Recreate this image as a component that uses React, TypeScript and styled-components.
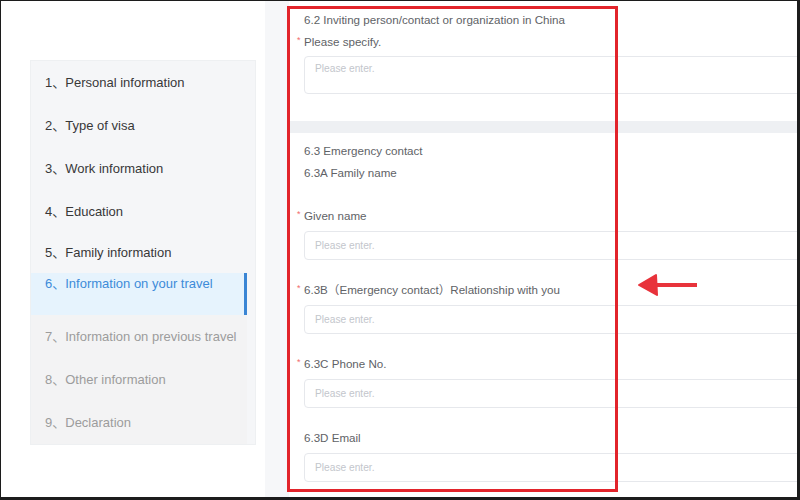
import React from 'react';
import styled, { createGlobalStyle } from 'styled-components';

const GlobalStyle = createGlobalStyle`
    html, body {
        margin: 0;
        padding: 0;
        background: #ffffff;
    }
    body {
        font-family: 'Liberation Sans', Arial, 'Noto Sans CJK SC', sans-serif;
    }
`;

const steps = [
    { no: 1, label: 'Personal information', state: 'done' },
    { no: 2, label: 'Type of visa', state: 'done' },
    { no: 3, label: 'Work information', state: 'done' },
    { no: 4, label: 'Education', state: 'done' },
    { no: 5, label: 'Family information', state: 'done' },
    { no: 6, label: 'Information on your travel', state: 'active' },
    { no: 7, label: 'Information on previous travel', state: 'todo' },
    { no: 8, label: 'Other information', state: 'todo' },
    { no: 9, label: 'Declaration', state: 'todo' },
] as const;

type StepState = 'done' | 'active' | 'todo';

const fields = [
    { label: 'Given name', required: true },
    { label: '6.3B（Emergency contact）Relationship with you', required: true },
    { label: '6.3C Phone No.', required: true },
    { label: '6.3D Email', required: false },
];

const Label = ({ text, required }: { text: string; required?: boolean }) => (
    <LabelText>
        {required && <Star>*</Star>}
        {text}
    </LabelText>
);

export default function App() {
    return (
        <>
            <GlobalStyle />
            <Frame>
                <LeftArea>
                    <Sidebar>
                        {steps.map(s => (
                            <Step key={s.no} state={s.state} tall={s.no === 6} short={s.no === 5}>
                                <span>{s.no}、</span>
                                {s.label}
                            </Step>
                        ))}
                    </Sidebar>
                </LeftArea>
                <Gutter />
                <Panel>
                    <Section top={8}>
                        <LabelText>6.2 Inviting person/contact or organization in China</LabelText>
                        <Label text='Please specify.' required />
                        <TextArea placeholder='Please enter.' />
                    </Section>
                    <Divider />
                    <Section top={7}>
                        <LabelText>6.3 Emergency contact</LabelText>
                        <LabelText>6.3A Family name</LabelText>
                        {fields.map((f, i) => (
                            <Field key={f.label} first={i === 0}>
                                <Label text={f.label} required={f.required} />
                                <Input placeholder='Please enter.' />
                            </Field>
                        ))}
                    </Section>
                </Panel>
                <Highlight />
                <Arrow viewBox='0 0 64 26' aria-hidden>
                    <path d='M19 11 H61 V15 H19 Z' fill='#e8333b' />
                    <path d='M3 13 L20 3 L21 23 Z' fill='#e8333b' stroke='#e8333b' strokeWidth='2' strokeLinejoin='round' />
                </Arrow>
            </Frame>
        </>
    );
}

const Frame = styled.div`
    position: relative;
    width: 800px;
    height: 500px;
    box-sizing: border-box;
    border: 1px solid #1c1c1c;
    border-right-width: 3px;
    border-bottom-width: 3px;
    display: flex;
    overflow: hidden;
    background: #ffffff;
`;

const LeftArea = styled.div`
    width: 264px;
    flex-shrink: 0;
    box-sizing: border-box;
    padding: 59px 0 0 29px;
    background: #ffffff;
`;

const Sidebar = styled.div`
    width: 226px;
    box-sizing: border-box;
    background: #f5f6f8;
    border: 1px solid #eef0f2;
    display: flex;
    flex-direction: column;
`;

const stepColor: Record<StepState, string> = {
    done: '#383838',
    active: '#3d8bd9',
    todo: '#9c9c9c',
};

const Step = styled.div<{ state: StepState; tall?: boolean; short?: boolean }>`
    height: ${({ tall, short }) => (tall ? 42 : short ? 40 : 43)}px;
    box-sizing: border-box;
    display: flex;
    align-items: ${({ tall }) => (tall ? 'flex-start' : 'center')};
    padding: ${({ tall }) => (tall ? '2px 0 0 14px' : '0 0 0 14px')};
    margin-right: 8px;
    font-size: 13px;
    line-height: 18px;
    white-space: nowrap;
    color: ${({ state }) => stepColor[state]};
    background: ${({ state }) => (state === 'active' ? '#e6f3fd' : state === 'todo' ? '#f3f3f4' : 'transparent')};
    border-right: 3px solid ${({ state }) => (state === 'active' ? '#3a85d4' : 'transparent')};
`;

const Gutter = styled.div`
    width: 24px;
    flex-shrink: 0;
    background: #f6f7f9;
`;

const Panel = styled.div`
    flex: 1;
    min-width: 0;
    background: #ffffff;
    overflow: hidden;
    display: flex;
    flex-direction: column;
`;

const Section = styled.div<{ top: number }>`
    padding: ${({ top }) => top}px 0 0 15px;
    display: flex;
    flex-direction: column;
`;

const LabelText = styled.div`
    position: relative;
    font-size: 11.6px;
    line-height: 22px;
    color: #606266;
    white-space: nowrap;
`;

const Star = styled.span`
    position: absolute;
    left: -7px;
    top: -2px;
    color: #f26b6b;
    font-size: 9px;
`;

const inputBase = `
    display: block;
    box-sizing: border-box;
    width: calc(100% + 10px);
    border: 1px solid #e6e8ec;
    border-radius: 4px;
    background: #ffffff;
    font-family: 'Liberation Sans', Arial, sans-serif;
    font-size: 10.2px;
    color: #606266;
    outline: none;
    &::placeholder {
        color: #c3c6cc;
    }
`;

const TextArea = styled.textarea`
    ${inputBase}
    height: 38px;
    margin: 3px 0 27px;
    padding: 6px 10px;
    resize: none;
`;

const Input = styled.input`
    ${inputBase}
    height: 29px;
    margin-top: 4px;
    padding: 0 10px;
`;

const Divider = styled.div`
    height: 12px;
    background: #eef0f3;
`;

const Field = styled.div<{ first?: boolean }>`
    display: flex;
    flex-direction: column;
    margin-top: ${({ first }) => (first ? 21 : 19)}px;
`;

const Highlight = styled.div`
    position: absolute;
    left: 286px;
    top: 5px;
    width: 331px;
    height: 486px;
    box-sizing: border-box;
    border: 3px solid #e2242b;
    pointer-events: none;
`;

const Arrow = styled.svg`
    position: absolute;
    left: 635px;
    top: 271px;
    width: 64px;
    height: 26px;
`;
